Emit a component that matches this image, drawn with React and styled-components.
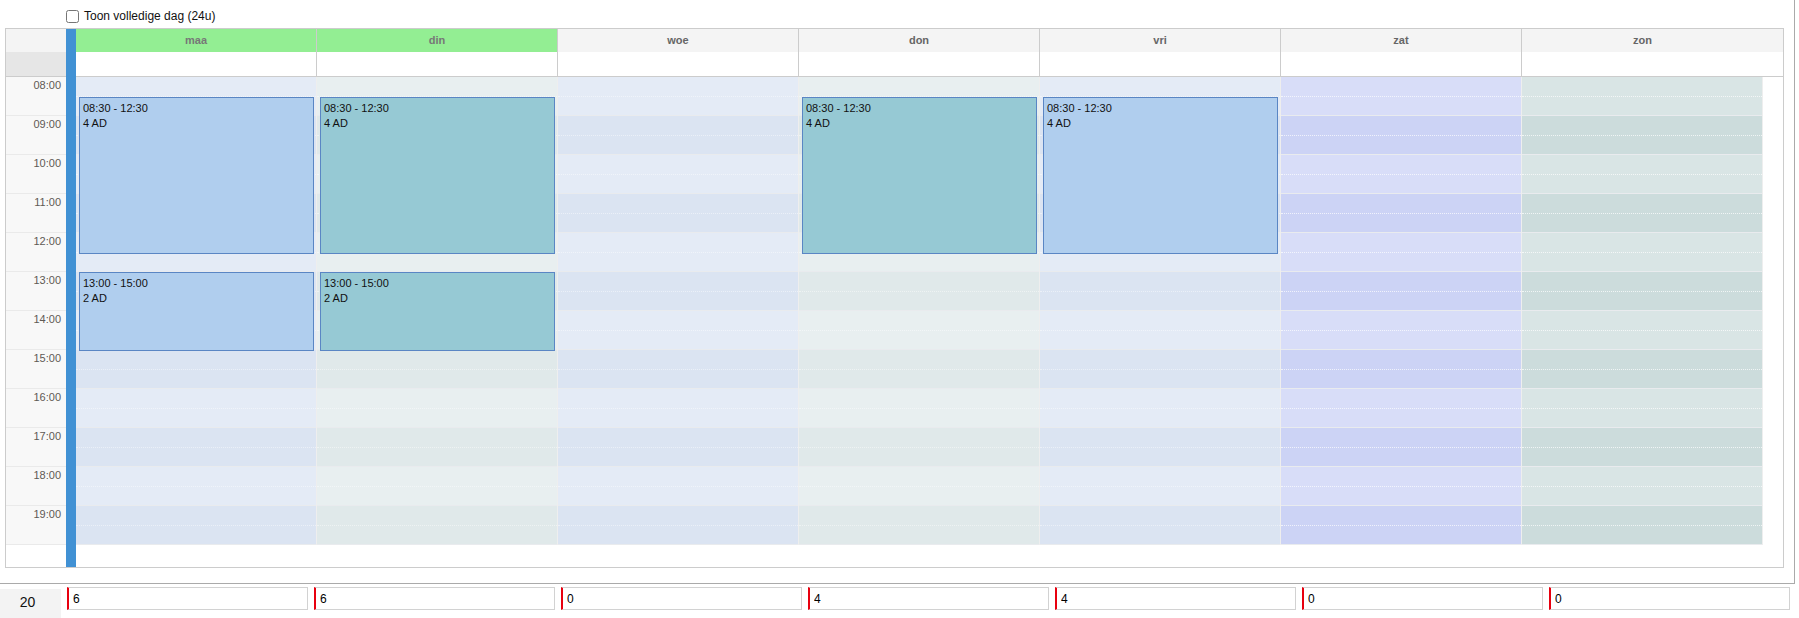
import React from 'react';
import styled, { createGlobalStyle } from 'styled-components';

const GlobalStyle = createGlobalStyle`
	body {
		margin: 0;
		background: #fff;
		font-family: 'Liberation Sans', Arial, sans-serif;
	}
`

const HOUR = 39
const START = 8
const hours = [8, 9, 10, 11, 12, 13, 14, 15, 16, 17, 18, 19]

const tones = {
	blue: { light: '#e4ebf6', dark: '#dbe4f2', dots: 'rgba(255, 255, 255, 0.45)' },
	green: { light: '#e8eff0', dark: '#e0e9ea', dots: 'rgba(255, 255, 255, 0.45)' },
	purple: { light: '#d8ddf8', dark: '#ccd3f5', dots: 'rgba(255, 255, 255, 0.7)' },
	teal: { light: '#d9e5e5', dark: '#ccdcdc', dots: 'rgba(255, 255, 255, 0.7)' },
}

const eventColors = {
	blue: '#b0ceee',
	teal: '#96c9d4',
}

const morning = (color) => ({ from: 8.5, to: 12.5, time: '08:30 - 12:30', label: '4 AD', color })
const afternoon = (color) => ({ from: 13, to: 15, time: '13:00 - 15:00', label: '2 AD', color })

const days = [
	{ name: 'maa', tone: 'blue', today: true, total: '6', events: [morning('blue'), afternoon('blue')] },
	{ name: 'din', tone: 'green', today: true, total: '6', events: [morning('teal'), afternoon('teal')] },
	{ name: 'woe', tone: 'blue', total: '0', events: [] },
	{ name: 'don', tone: 'green', total: '4', events: [morning('teal')] },
	{ name: 'vri', tone: 'blue', total: '4', events: [morning('blue')] },
	{ name: 'zat', tone: 'purple', total: '0', events: [] },
	{ name: 'zon', tone: 'teal', total: '0', events: [] },
]

const Panel = styled.div`
	width: 1795px;
	height: 584px;
	box-sizing: border-box;
	padding-left: 5px;
	border-right: 1px solid #aaa;
	border-bottom: 1px solid #aaa;
`

const Toolbar = styled.label`
	display: flex;
	align-items: center;
	gap: 5px;
	height: 28px;
	box-sizing: border-box;
	padding-top: 4px;
	padding-left: 61px;
	font-size: 12px;
	color: #111;
`

const Check = styled.input`
	margin: 0;
	width: 13px;
	height: 13px;
`

const Calendar = styled.div`
	display: flex;
	width: 1779px;
	height: 540px;
	box-sizing: border-box;
	border: 1px solid #ccc;
`

const TimeColumn = styled.div`
	display: flex;
	flex-direction: column;
	width: 60px;
	flex-shrink: 0;
`

const TimeHeadTop = styled.div`
	height: 23px;
	background: #f4f4f4;
`

const TimeHeadSub = styled.div`
	height: 24px;
	background: #e6e6e6;
	border-bottom: 1px solid #ccc;
`

const TimeLabel = styled.div`
	height: ${HOUR}px;
	box-sizing: border-box;
	padding: 2px 5px 0 0;
	background: #f8f8f8;
	border-bottom: 1px solid #eaeaea;
	text-align: right;
	font-size: 11px;
	line-height: 13px;
	color: #5f5a55;
`

const BlueBar = styled.div`
	width: 10px;
	flex-shrink: 0;
	background: #4191d4;
`

const Main = styled.div`
	display: flex;
	flex-direction: column;
	flex: 1;
`

const HeaderRow = styled.div`
	display: flex;
	border-bottom: 1px solid #ccc;
`

const DayHead = styled.div`
	display: flex;
	flex-direction: column;
	width: ${p => p.$last ? 'auto' : '241px'};
	flex: ${p => p.$last ? 1 : 'none'};
	box-sizing: border-box;
	border-right: ${p => p.$last ? 'none' : '1px solid #ccc'};
`

const DayTitle = styled.div`
	height: 23px;
	line-height: 23px;
	background: ${p => p.$today ? '#93ee93' : '#f4f4f4'};
	padding-right: ${p => p.$last ? '20px' : '0'};
	text-align: center;
	font-size: 11px;
	font-weight: bold;
	color: ${p => p.$today ? '#777' : '#666'};
`

const DaySub = styled.div`
	height: 24px;
	background: #fff;
`

const Body = styled.div`
	display: flex;
`

const DayColumn = styled.div`
	position: relative;
	width: 241px;
	box-sizing: border-box;
	border-right: 1px solid #eeeeee;
`

const HourCell = styled.div`
	display: flex;
	flex-direction: column;
	height: ${HOUR}px;
	box-sizing: border-box;
	background: ${p => p.$bg};
	border-bottom: 1px solid #e9ebee;
`

const HalfSlot = styled.div`
	height: 19px;
	border-bottom: 1px dotted ${p => p.$dots};
`

const EventBox = styled.div`
	position: absolute;
	left: 3px;
	right: 2px;
	box-sizing: border-box;
	padding: 3px 3px;
	background: ${p => eventColors[p.$color]};
	border: 1px solid #5a86c4;
	font-size: 11px;
	line-height: 15px;
	color: #111;
`

const Footer = styled.div`
	display: flex;
	align-items: flex-start;
	gap: 6px;
	margin-top: 3px;
`

const TotalLabel = styled.div`
	width: 61px;
	height: 31px;
	margin-top: 2px;
	box-sizing: border-box;
	padding: 5px 6px 0 0;
	background: #f3f3f3;
	text-align: center;
	font-size: 14px;
	line-height: 16px;
	color: #111;
`

const CountInput = styled.input`
	width: 241px;
	height: 23px;
	box-sizing: border-box;
	margin: 0;
	padding: 0 0 0 4px;
	border: 1px solid #d2d2d2;
	border-left: 2px solid #e8000f;
	border-radius: 0;
	outline: none;
	background: #fff;
	font-family: 'Liberation Sans', Arial, sans-serif;
	font-size: 12px;
	color: #000;
`

const App = () => {
	return (
		<>
			<GlobalStyle />
			<Panel>
				<Toolbar>
					<Check type='checkbox' />
					Toon volledige dag (24u)
				</Toolbar>
				<Calendar>
					<TimeColumn>
						<TimeHeadTop />
						<TimeHeadSub />
						{hours.map(h => (
							<TimeLabel key={h}>{String(h).padStart(2, '0')}:00</TimeLabel>
						))}
					</TimeColumn>
					<BlueBar />
					<Main>
						<HeaderRow>
							{days.map((d, i) => {
								const last = i === days.length - 1
								return (
									<DayHead key={d.name} $last={last}>
										<DayTitle $today={d.today} $last={last}>{d.name}</DayTitle>
										<DaySub />
									</DayHead>
								)
							})}
						</HeaderRow>
						<Body>
							{days.map(d => (
								<DayColumn key={d.name}>
									{hours.map((h, i) => (
										<HourCell key={h} $bg={i % 2 ? tones[d.tone].dark : tones[d.tone].light}>
											<HalfSlot $dots={tones[d.tone].dots} />
										</HourCell>
									))}
									{d.events.map(ev => (
										<EventBox
											key={ev.time}
											$color={ev.color}
											style={{ top: (ev.from - START) * HOUR, height: (ev.to - ev.from) * HOUR + 1 }}
										>
											<div>{ev.time}</div>
											<div>{ev.label}</div>
										</EventBox>
									))}
								</DayColumn>
							))}
						</Body>
					</Main>
				</Calendar>
			</Panel>
			<Footer>
				<TotalLabel>20</TotalLabel>
				{days.map(d => (
					<CountInput key={d.name} readOnly value={d.total} />
				))}
			</Footer>
		</>
	)
}

export default App
